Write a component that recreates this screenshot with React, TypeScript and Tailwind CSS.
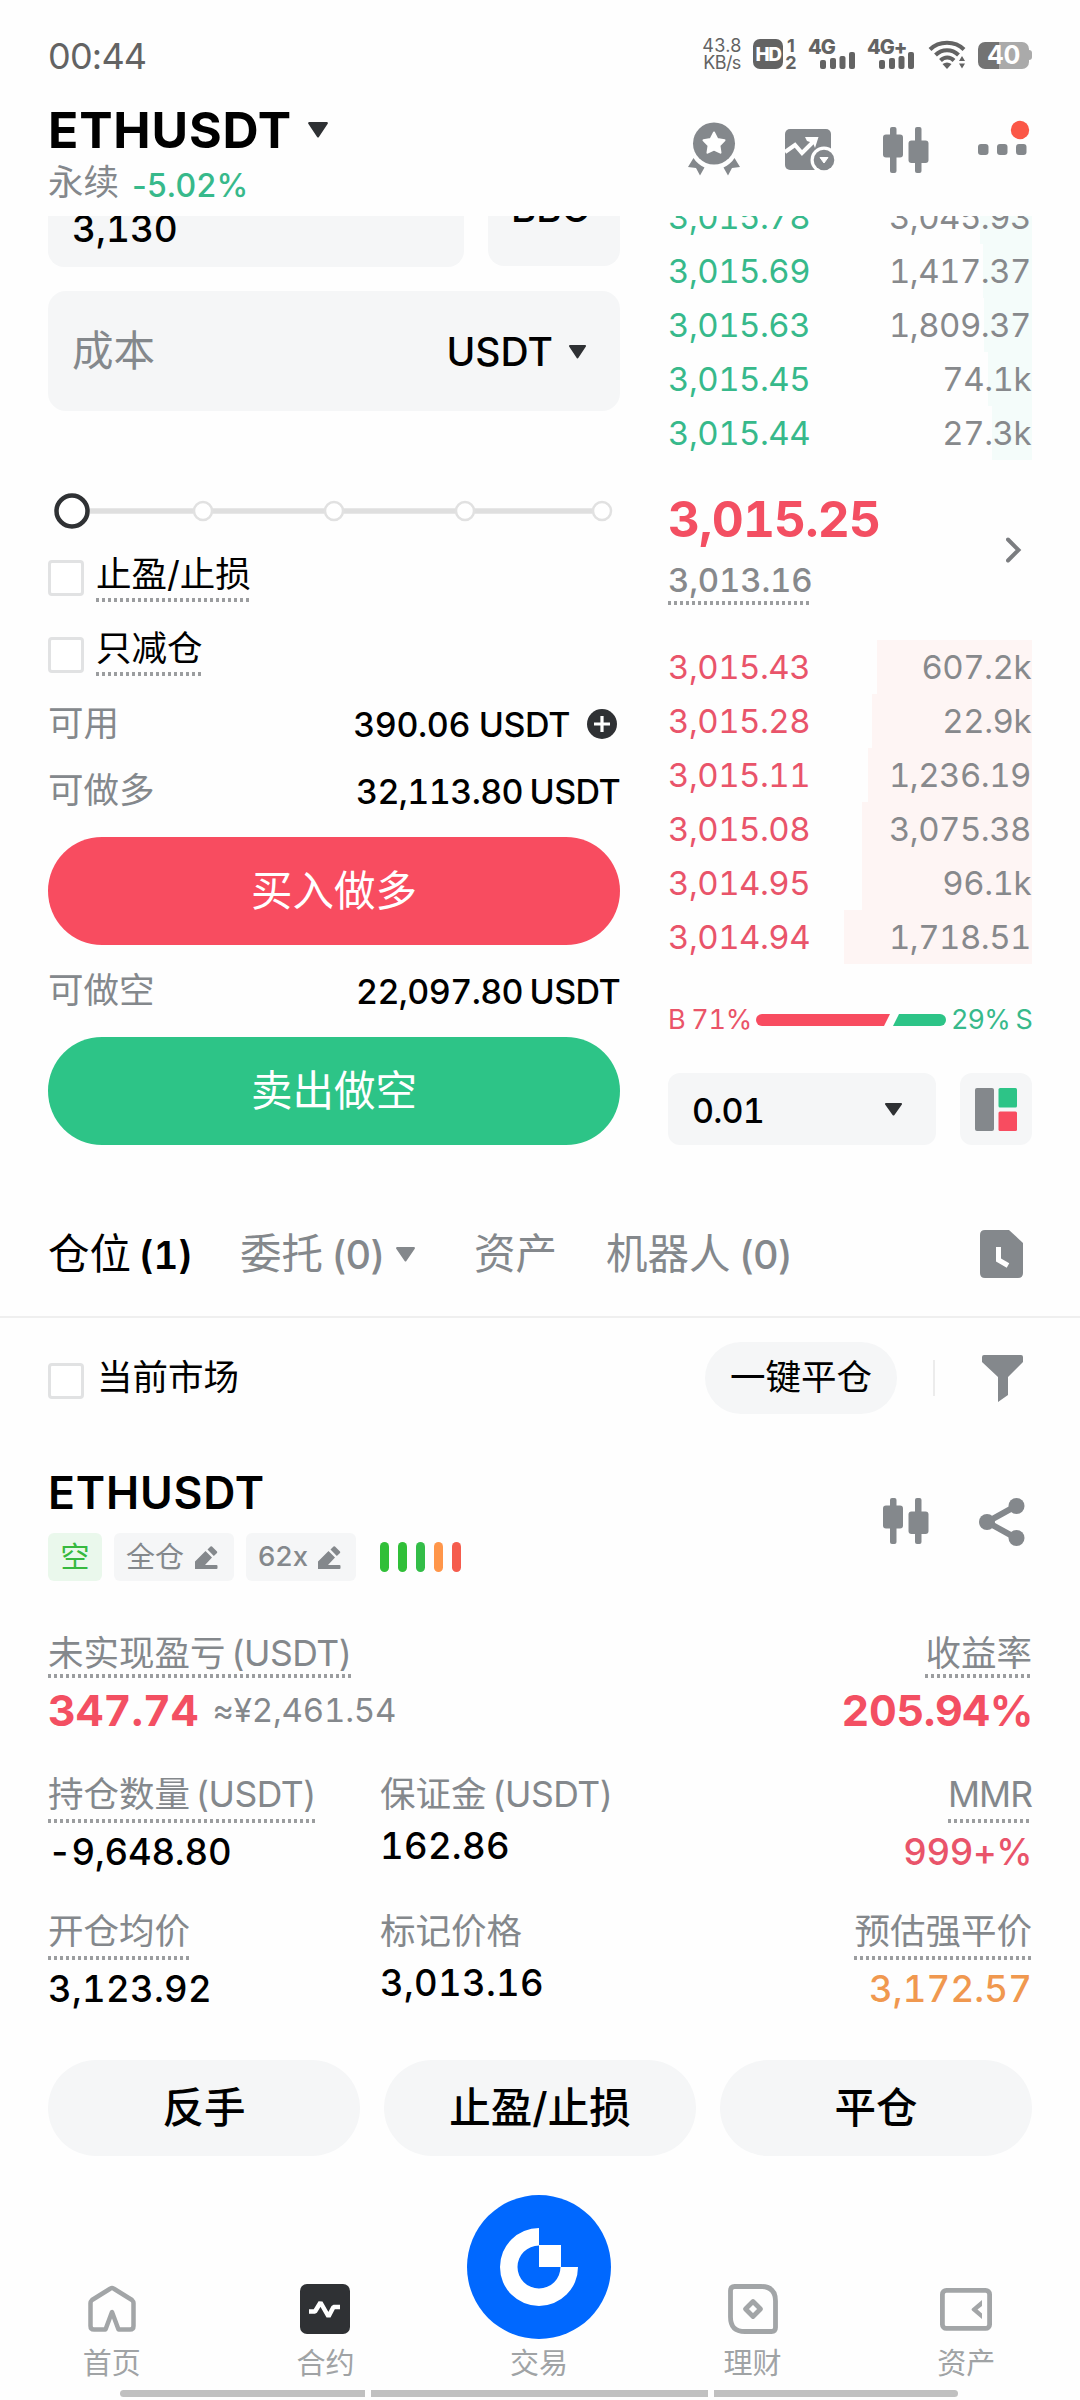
import React from "react";

const GRAY = "#84888c";

function Caret({ w, h, color = "#2f3134" }: { w: number; h: number; color?: string }) {
  return (
    <svg width={w} height={h} viewBox="0 0 20 14" preserveAspectRatio="none" className="shrink-0">
      <path d="M2 1H18L10 12.5Z" fill={color} stroke={color} strokeWidth="2" strokeLinejoin="round" />
    </svg>
  );
}

function Dots() {
  return (
    <span className="block h-[4px] w-full bg-[repeating-linear-gradient(90deg,#9b9d9f_0px,#9b9d9f_3px,transparent_3px,transparent_6px)]" />
  );
}

function Checkbox({ className }: { className: string }) {
  return <span className={`block h-[36px] w-[36px] shrink-0 rounded-[4px] border-[3px] border-[#e1e2e3] bg-white ${className}`} />;
}

function Signal({ label }: { label: string }) {
  return (
    <div className="relative h-[30px] w-[48px]">
      <span className="absolute left-0 top-[-2px] whitespace-nowrap text-[20px] font-extrabold leading-[20px] tracking-[-1px]">{label}</span>
      <svg className="absolute bottom-0 left-[12px]" width="36" height="17" viewBox="0 0 36 17" fill="#636363">
        <rect x="0" y="8" width="6" height="9" rx="2" />
        <rect x="10" y="6" width="6" height="11" rx="2" />
        <rect x="19.500" y="4" width="6" height="13" rx="2" />
        <rect x="29" y="0" width="6" height="17" rx="2" />
      </svg>
    </div>
  );
}

function StatusBar() {
  return (
    <div className="flex h-[108px] shrink-0 items-center pl-[48px] text-[#636363]">
      <span className="mt-[4px] w-[654px] text-[36px] leading-[40px] tracking-[-0.8px]">00:44</span>
      <div className="w-[40px] text-center text-[18px] leading-[17px]">
        <div className="tracking-[0.3px]">43.8</div>
        <div className="tracking-[-0.6px]">KB/s</div>
      </div>
      <div className="ml-[11px] flex h-[30px] w-[30px] items-center justify-center rounded-[7px] bg-[#636363] text-[19px] font-extrabold leading-none tracking-[-1.5px] text-white">
        HD
      </div>
      <div className="ml-[2px] flex w-[12px] flex-col items-center text-[18px] font-bold leading-[17px]">
        <span>1</span>
        <span>2</span>
      </div>
      <div className="ml-[11px]">
        <Signal label="4G" />
      </div>
      <div className="ml-[11px]">
        <Signal label="4G+" />
      </div>
      <svg className="ml-[13px]" width="38" height="30" viewBox="0 0 38 30">
        <g fill="none" stroke="#636363" strokeWidth="4">
          <path d="M2 10.500C11 1.500 27 1.500 36 10.500" />
          <path d="M7.500 16C14 9.500 24 9.500 30.500 16" />
          <path d="M12.500 21.500C16.500 17.500 22 17.500 26 21.500" />
        </g>
        <path d="M14.500 25Q19 22 23.500 25L19 30Z" fill="#636363" />
        <path d="M31 22L34 17L37 22ZM31 24.500H37L34 29.500Z" fill="#636363" />
      </svg>
      <div className="ml-[12px] mt-[2px] flex items-center">
        <div className="flex h-[27px] w-[51px] items-center justify-center rounded-[7px] bg-[linear-gradient(90deg,#737373_0%,#737373_42%,#aaaaaa_42%,#aaaaaa_100%)] text-[25px] font-bold leading-none tracking-[-0.5px] text-white">
          40
        </div>
        <div className="h-[10px] w-[3px] rounded-r-[3px] bg-[#aaaaaa]" />
      </div>
    </div>
  );
}

function Candles() {
  return (
    <svg width="46" height="46" viewBox="0 0 46 46" fill={GRAY}>
      <rect x="7" y="0" width="6.500" height="46" rx="2" />
      <rect x="0" y="7.500" width="20" height="23" rx="3" />
      <rect x="32" y="0" width="6.500" height="46" rx="2" />
      <rect x="25.500" y="13.500" width="20" height="22.500" rx="3" />
    </svg>
  );
}

function Header() {
  return (
    <div className="relative flex h-[108px] shrink-0 justify-between pl-[48px] pr-[50px]">
      <div>
        <div className="flex items-center">
          <span className="text-[50px] font-bold leading-[44px] tracking-[0.8px]">ETHUSDT</span>
          <span className="ml-[15px]">
            <Caret w={22} h={16} />
          </span>
        </div>
        <div className="mt-[10px] flex items-center text-[#84888c]">
          <span className="text-[35.500px] leading-[40px]">永续</span>
          <span className="ml-[13px] mt-[6px] text-[32px] font-medium leading-[36px] tracking-[0.3px] text-[#37b98b]">-5.02%</span>
        </div>
      </div>
      <div className="flex items-start">
        <svg className="mt-[14px]" width="54" height="54" viewBox="0 0 54 54" fill={GRAY}>
          <circle cx="27" cy="21.500" r="21" />
          <path
            d="M27 10.500L30.300 17L37.500 18.200L32.400 23.500L33.500 30.700L27 27.500L20.500 30.700L21.600 23.500L16.500 18.200L23.700 17Z"
            fill="#fff"
            stroke="#fff"
            strokeWidth="2"
            strokeLinejoin="round"
          />
          <path d="M6.500 36C9 40 13 43.500 17.500 45.500L13 53.500L9 46L1 45Z" />
          <path d="M47.500 36C45 40 41 43.500 36.500 45.500L41 53.500L45 46L53 45Z" />
        </svg>
        <svg className="ml-[44px] mt-[21px]" width="50" height="42" viewBox="0 0 50 42">
          <rect x="0" y="0" width="46" height="41" rx="5" fill={GRAY} />
          <path d="M0 23L10 16L17 24L30 11" fill="none" stroke="#fff" strokeWidth="4" />
          <path d="M20 8H33.500L30 19L28 14L22 12Z" fill="#fff" />
          <circle cx="39" cy="31" r="13.500" fill="#fff" />
          <circle cx="39" cy="31" r="10.300" fill={GRAY} />
          <path d="M35 28.500H43L39 34Z" fill="#fff" stroke="#fff" strokeLinejoin="round" />
        </svg>
        <div className="ml-[48px] mt-[19px]">
          <Candles />
        </div>
        <svg className="ml-[49px] mt-[12px]" width="52" height="36" viewBox="0 0 52 36">
          <rect x="0" y="24" width="10.500" height="11" rx="3" fill={GRAY} />
          <rect x="19" y="24" width="10.500" height="11" rx="3" fill={GRAY} />
          <rect x="38" y="24" width="10.500" height="11" rx="3" fill={GRAY} />
          <circle cx="42" cy="10" r="9.200" fill="#fb5747" />
        </svg>
      </div>
    </div>
  );
}

function AmountRow({ label, value, plus, className }: { label: string; value: string; plus?: boolean; className: string }) {
  return (
    <div className={`flex h-[40px] items-center justify-between whitespace-nowrap ${className}`}>
      <span className="text-[35.500px] leading-[40px] text-[#84888c]">{label}</span>
      <span className="flex items-center">
        <span
          className={
            plus
              ? "text-[34px] font-medium tabular-nums tracking-[-0.4px]"
              : "mt-[1px] text-[34px] font-medium tabular-nums tracking-[-0.6px] [word-spacing:-2px]"
          }
        >
          {value}
        </span>
        {plus && (
          <svg className="ml-[17px] mr-[3px]" width="30" height="30" viewBox="0 0 30 30">
            <circle cx="15" cy="15" r="15" fill="#2f3134" />
            <path d="M15 7V23M7 15H23" stroke="#fff" strokeWidth="3.200" />
          </svg>
        )}
      </span>
    </div>
  );
}

function OrderForm() {
  return (
    <div className="w-[572px] shrink-0">
      <div className="flex gap-[24px]">
        <div className="h-[51px] w-[416px] rounded-b-[16px] bg-[#f5f6f7] pl-[24px]">
          <div className="mt-[-7px] text-[37px] font-medium leading-[40px] tabular-nums">3,130</div>
        </div>
        <div className="h-[50px] w-[132px] rounded-b-[16px] bg-[#f5f6f7] pl-[23px]">
          <div className="mt-[-28px] text-[38.500px] font-medium leading-[40px]">BBO</div>
        </div>
      </div>
      <div className="mt-[24px] flex h-[120px] items-center justify-between rounded-[18px] bg-[#f5f6f7] pl-[24px] pr-[33px]">
        <span className="text-[41.500px] leading-[44px] text-[#84888c]">成本</span>
        <span className="mt-[2px] flex items-center text-[39px] font-medium leading-[44px]">
          USDT
          <span className="ml-[15px]">
            <Caret w={19} h={14} />
          </span>
        </span>
      </div>
      <svg className="mt-[82px] block" width="572" height="36" viewBox="0 0 572 36">
        <path d="M24 18H554" stroke="#dfdfdf" strokeWidth="5.500" />
        <circle cx="24" cy="18" r="15.500" fill="#fff" stroke="#2f3134" strokeWidth="4.500" />
        <circle cx="155" cy="18" r="9" fill="#fff" stroke="#e1e1e1" strokeWidth="2.500" />
        <circle cx="286" cy="18" r="9" fill="#fff" stroke="#e1e1e1" strokeWidth="2.500" />
        <circle cx="417" cy="18" r="9" fill="#fff" stroke="#e1e1e1" strokeWidth="2.500" />
        <circle cx="554" cy="18" r="9" fill="#fff" stroke="#e1e1e1" strokeWidth="2.500" />
      </svg>
      <div className="mt-[27px] flex items-start">
        <Checkbox className="mt-[4px]" />
        <div className="ml-[12px]">
          <div className="mb-[5px] pt-px text-[35.500px] leading-[36px]">止盈/止损</div>
          <Dots />
        </div>
      </div>
      <div className="mt-[29px] flex items-start">
        <Checkbox className="mt-[6px]" />
        <div className="ml-[12px]">
          <div className="mb-[5px] text-[35.500px] leading-[36px]">只减仓</div>
          <Dots />
        </div>
      </div>
      <AmountRow className="mt-[28px]" label="可用" value="390.06 USDT" plus />
      <AmountRow className="mt-[27px]" label="可做多" value="32,113.80 USDT" />
      <button className="mt-[26px] flex h-[108px] w-full items-center justify-center rounded-full bg-[#f84c60] text-[41.500px] leading-[44px] text-white">
        买入做多
      </button>
      <AmountRow className="mt-[26px]" label="可做空" value="22,097.80 USDT" />
      <button className="mt-[26px] flex h-[108px] w-full items-center justify-center rounded-full bg-[#2dc487] text-[41.500px] leading-[44px] text-white">
        卖出做空
      </button>
    </div>
  );
}

type Level = { price: string; amount: string; depth: number };

const upper: Level[] = [
  { price: "3,015.78", amount: "3,045.93", depth: 52 },
  { price: "3,015.69", amount: "1,417.37", depth: 49 },
  { price: "3,015.63", amount: "1,809.37", depth: 48 },
  { price: "3,015.45", amount: "74.1k", depth: 44 },
  { price: "3,015.44", amount: "27.3k", depth: 40 },
];

const lower: Level[] = [
  { price: "3,015.43", amount: "607.2k", depth: 155 },
  { price: "3,015.28", amount: "22.9k", depth: 160 },
  { price: "3,015.11", amount: "1,236.19", depth: 164 },
  { price: "3,015.08", amount: "3,075.38", depth: 170 },
  { price: "3,014.95", amount: "96.1k", depth: 170 },
  { price: "3,014.94", amount: "1,718.51", depth: 188 },
];

function Levels({ rows, text, fill }: { rows: Level[]; text: string; fill: string }) {
  return (
    <>
      {rows.map((r) => (
        <div key={r.price} className="relative flex h-[54px] items-center justify-between pr-px pt-[2px] text-[33px] tabular-nums tracking-[-0.5px]">
          <div className={`absolute inset-y-0 right-0 ${fill}`} style={{ width: r.depth }} />
          <span className={`relative ${text}`}>{r.price}</span>
          <span className="relative text-[#87898c]">{r.amount}</span>
        </div>
      ))}
    </>
  );
}

function OrderBook() {
  return (
    <div className="ml-[48px] mt-[-26px] w-[364px] shrink-0">
      <Levels rows={upper} text="text-[#37b98b]" fill="bg-[#f4fcfa]" />
      <div className="mt-[30px] flex items-center justify-between">
        <div>
          <div className="text-[49.500px] font-bold leading-[58px] tabular-nums tracking-[-0.8px] text-[#f34f62]">3,015.25</div>
          <div className="mt-[14px] w-[142px]">
            <div className="mb-[3px] text-[33px] font-medium leading-[36px] tabular-nums tracking-[-0.2px] text-[#87898c]">3,013.16</div>
            <Dots />
          </div>
        </div>
        <svg className="mr-[10px] mt-[5px]" width="16" height="26" viewBox="0 0 16 26" fill="none" stroke="#7b7d80" strokeWidth="4">
          <path d="M2 2.500L12.500 13L2 23.500" strokeLinecap="round" />
        </svg>
      </div>
      <div className="mt-[35px]">
        <Levels rows={lower} text="text-[#e9546a]" fill="bg-[#fef5f4]" />
      </div>
      <div className="mt-[41px] flex h-[30px] items-center whitespace-nowrap text-[27px] tabular-nums">
        <span className="w-[88px] tracking-[-0.3px] text-[#ea5468] [word-spacing:-1px]">B 71%</span>
        <svg width="190" height="12" viewBox="0 0 190 12">
          <path d="M6 0H134L128 12H6A6 6 0 0 1 6 0Z" fill="#f84c60" />
          <path d="M143 0H184A6 6 0 0 1 184 12H137Z" fill="#2dc487" />
        </svg>
        <span className="ml-auto tracking-[-0.8px] text-[#37b98b] [word-spacing:-1px]">29% S</span>
      </div>
      <div className="mt-[38px] flex justify-between">
        <div className="flex h-[72px] w-[268px] items-center justify-between rounded-[12px] bg-[#f5f6f7] pl-[24px] pr-[33px]">
          <span className="mt-[2px] text-[34px] font-medium tabular-nums tracking-[-0.8px]">0.01</span>
          <Caret w={19} h={13} />
        </div>
        <div className="flex h-[72px] w-[72px] items-center justify-center rounded-[12px] bg-[#f5f6f7]">
          <svg width="42" height="43" viewBox="0 0 42 43">
            <rect width="19" height="43" rx="2" fill={GRAY} />
            <rect x="23.500" width="18.500" height="19.500" rx="1.500" fill="#2dc487" />
            <rect x="23.500" y="23.500" width="18.500" height="19.500" rx="1.500" fill="#f84c60" />
          </svg>
        </div>
      </div>
    </div>
  );
}

function Tabs() {
  return (
    <div className="mt-[85px] flex h-[48px] shrink-0 items-center whitespace-nowrap pl-[48px] text-[41.500px] leading-[48px] text-[#84888c]">
      <span className="w-[192px] text-black">
        仓位 <span className="-ml-[4px] text-[38.500px] font-semibold tabular-nums tracking-[-0.3px]">(1)</span>
      </span>
      <span className="flex w-[234px] items-center">
        <span>
          委托 <span className="-ml-[3px] text-[39px] font-medium tracking-[-0.4px]">(0)</span>
        </span>
        <span className="ml-[11px]">
          <Caret w={21} h={15} color={GRAY} />
        </span>
      </span>
      <span className="w-[132px]">资产</span>
      <span>
        机器人 <span className="-ml-[3px] text-[39px] font-medium tracking-[-0.4px]">(0)</span>
      </span>
      <svg className="ml-auto mr-[57px]" width="43" height="48" viewBox="0 0 43 48">
        <path d="M5 0H29L43 13V43Q43 48 38 48H5Q0 48 0 43V5Q0 0 5 0Z" fill={GRAY} />
        <path d="M18.500 17V30L28 35.500" fill="none" stroke="#fff" strokeWidth="5" />
      </svg>
    </div>
  );
}

function FilterRow() {
  return (
    <div className="mt-[24px] flex h-[72px] shrink-0 items-center pl-[48px] pr-[57px]">
      <Checkbox className="mt-[6px]" />
      <span className="ml-[13px] text-[35.500px] leading-[40px]">当前市场</span>
      <div className="ml-auto flex h-[72px] w-[192px] items-center justify-center rounded-full bg-[#f5f6f7] text-[35.500px] leading-[40px]">一键平仓</div>
      <div className="ml-[36px] h-[36px] w-[2px] bg-[#ececec]" />
      <svg className="ml-[47px]" width="41" height="47" viewBox="0 0 41 47">
        <path d="M2 0H39Q41 0 41 2V7L26 22V40L16 47V22L0 7V2Q0 0 2 0Z" fill={GRAY} />
      </svg>
    </div>
  );
}

function Pencil() {
  return (
    <svg width="23" height="23" viewBox="0 0 23 23" fill={GRAY}>
      <path d="M0 15.500L10.500 5L17 11.500L10 19H21.500Q22.500 19 22.500 20V22Q22.500 23 21.500 23H0Z" />
      <path d="M12.500 3.500L15.500 0.500Q16.300 0 17 0.500L22 5.500Q22.500 6.300 22 7L18.800 10Z" />
    </svg>
  );
}

function Stat({
  label,
  unit,
  value,
  dotted,
  right,
  labelClass = "",
  valueClass = "tracking-[0.3px] text-black",
}: {
  label: string;
  unit?: string;
  value: string;
  dotted?: boolean;
  right?: boolean;
  labelClass?: string;
  valueClass?: string;
}) {
  return (
    <div className={right ? "flex flex-col items-end whitespace-nowrap" : "flex flex-col items-start whitespace-nowrap"}>
      <div>
        <div className={`h-[36px] text-[35.500px] leading-[36px] text-[#84888c] ${labelClass}`}>
          {label}
          {unit && <span className="ml-[6px] tracking-[-0.5px]">{unit}</span>}
        </div>
        {dotted && (
          <div className="mt-[6px]">
            <Dots />
          </div>
        )}
      </div>
      <div className={`${dotted ? "mt-[9px]" : "mt-[13px]"} h-[40px] text-[36.500px] font-medium leading-[40px] tabular-nums ${valueClass}`}>{value}</div>
    </div>
  );
}

function Position() {
  return (
    <div className="h-[742px] shrink-0 px-[48px]">
      <div className="mt-[55px] flex h-[112px] items-start justify-between">
        <div>
          <div className="text-[44.500px] font-semibold leading-[48px] tracking-[0.8px]">ETHUSDT</div>
          <div className="mt-[16px] flex h-[48px] gap-[12px] text-[29px] leading-none text-[#84888c]">
            <span className="flex w-[54px] items-center justify-center rounded-[6px] bg-[#eaf8ec] text-[#37b93f]">空</span>
            <span className="flex w-[120px] items-center gap-[11px] rounded-[6px] bg-[#f5f6f7] pl-[12px]">
              全仓
              <Pencil />
            </span>
            <span className="flex w-[110px] items-center gap-[10px] rounded-[6px] bg-[#f5f6f7] pl-[12px]">
              <span className="text-[27.500px] font-medium tracking-[0.2px]">62x</span>
              <Pencil />
            </span>
            <span className="ml-[12px] flex items-center gap-[9px]">
              <span className="h-[30px] w-[9px] rounded-full bg-[#30bf38]" />
              <span className="h-[30px] w-[9px] rounded-full bg-[#30bf38]" />
              <span className="h-[30px] w-[9px] rounded-full bg-[#33bd48]" />
              <span className="h-[30px] w-[9px] rounded-full bg-[#ff964a]" />
              <span className="h-[30px] w-[9px] rounded-full bg-[#f55c4d]" />
            </span>
          </div>
        </div>
        <div className="mr-[7px] mt-[29px] flex gap-[50px]">
          <Candles />
          <svg width="46" height="48" viewBox="0 0 46 48" fill={GRAY}>
            <path d="M37 8L8 24L37 40" fill="none" stroke={GRAY} strokeWidth="6" />
            <circle cx="37.500" cy="8" r="8" />
            <circle cx="8" cy="24" r="8" />
            <circle cx="37.500" cy="40" r="8" />
          </svg>
        </div>
      </div>

      <div className="mt-[55px] flex h-[42px] justify-between text-[35.500px] leading-[36px] text-[#84888c]">
        <div>
          <div className="mb-[2px] h-[36px]">
            未实现盈亏<span className="ml-[6px] tracking-[-0.5px]">(USDT)</span>
          </div>
          <Dots />
        </div>
        <div>
          <div className="mb-[2px] h-[36px]">收益率</div>
          <Dots />
        </div>
      </div>
      <div className="mt-[10px] flex h-[44px] items-center justify-between text-[43px] font-bold leading-[44px] tabular-nums text-[#f34f62]">
        <div className="flex items-center">
          <span>347.74</span>
          <span className="ml-[14px] text-[33px] font-normal tracking-[-0.2px] text-[#84888c]">≈¥2,461.54</span>
        </div>
        <span className="-mr-px tracking-[-0.4px]">205.94%</span>
      </div>

      <div className="mt-[45px] grid grid-cols-[332px_1fr_auto] gap-y-[42px]">
        <Stat label="持仓数量" unit="(USDT)" value="-9,648.80" dotted valueClass="tracking-[-0.2px] text-black" />
        <Stat label="保证金" unit="(USDT)" value="162.86" />
        <Stat label="MMR" value="999+%" dotted right labelClass="tracking-[-1px]" valueClass="tracking-[-0.4px] text-[#e9546a]" />
        <Stat label="开仓均价" value="3,123.92" dotted />
        <Stat label="标记价格" value="3,013.16" />
        <Stat label="预估强平价" value="3,172.57" dotted right valueClass="tracking-[0.2px] text-[#f0984f]" />
      </div>

      <div className="mt-[51px] grid grid-cols-3 gap-[24px] text-[41.500px] font-medium leading-[44px]">
        <button className="h-[96px] rounded-full bg-[#f5f6f7]">反手</button>
        <button className="h-[96px] rounded-full bg-[#f5f6f7]">止盈/止损</button>
        <button className="h-[96px] rounded-full bg-[#f5f6f7]">平仓</button>
      </div>
    </div>
  );
}

function NavItem({ label, children }: { label: string; children: React.ReactNode }) {
  return (
    <div className="flex flex-col items-center justify-end">
      {children}
      <span className="pt-px text-[29px] leading-[35px] text-[#a0a3a5]">{label}</span>
    </div>
  );
}

function BottomNav() {
  const line = "#a2a5a7";
  return (
    <>
      <div className="grid h-[225px] shrink-0 grid-cols-5 pl-[5px] pr-[7px]">
        <NavItem label="首页">
          <svg className="mb-[12px]" width="48" height="48" viewBox="0 0 48 48" fill="none" stroke={line} strokeWidth="4.500" strokeLinejoin="round">
            <path d="M17.500 44.500H6Q2.500 44.500 2.500 41V18Q2.500 16.500 4 15L22.500 3.500Q24 2.500 25.500 3.500L44 15Q45.500 16.500 45.500 18V41Q45.500 44.500 42 44.500H30.500L24 27Z" />
          </svg>
        </NavItem>
        <NavItem label="合约">
          <svg className="mb-[11px]" width="50" height="50" viewBox="0 0 50 50">
            <rect width="50" height="50" rx="7" fill="#2f3134" />
            <path d="M9 27.500H15L20.500 18.500L28.500 32.500L33.500 23H40" fill="none" stroke="#fff" strokeWidth="4.500" strokeLinejoin="bevel" />
          </svg>
        </NavItem>
        <NavItem label="交易">
          <svg className="mb-[6px]" width="144" height="144" viewBox="0 0 144 144">
            <circle cx="72" cy="72" r="72" fill="#0068ff" />
            <path d="M72 33A39 39 0 1 0 111 72H93.500A21.500 21.500 0 1 1 72 50.500Z" fill="#fff" />
            <rect x="72" y="50" width="22" height="22" fill="#fff" />
          </svg>
        </NavItem>
        <NavItem label="理财">
          <svg className="mb-[11px]" width="50" height="50" viewBox="0 0 50 50" fill="none" stroke={line} strokeWidth="4.800">
            <path d="M6.500 2.500H33Q47.500 2.500 47.500 17V43.500Q47.500 47.500 43.500 47.500H17Q2.500 47.500 2.500 33V6.500Q2.500 2.500 6.500 2.500Z" />
            <path d="M25 17.500L32.500 25L25 32.500L17.500 25Z" strokeLinejoin="round" />
          </svg>
        </NavItem>
        <NavItem label="资产">
          <svg className="mb-[14px]" width="52" height="43" viewBox="0 0 52 43">
            <rect x="2.400" y="2.400" width="47.200" height="38" rx="4" fill="none" stroke={line} strokeWidth="4.800" />
            <path d="M42 12V18L37.500 21.500L42 25.500V31L32 22.500Q31 21.500 32 20.500Z" fill={line} />
          </svg>
        </NavItem>
      </div>
      <div className="ml-[120px] mt-[9px] flex h-[7px] shrink-0 gap-[6px]">
        <div className="w-[245px] rounded-l-full bg-[#c0c0c0]" />
        <div className="w-[337px] bg-[#c0c0c0]" />
        <div className="w-[244px] rounded-r-full bg-[#c0c0c0]" />
      </div>
    </>
  );
}

export default function App() {
  return (
    <div className="flex h-[2400px] w-[1080px] flex-col overflow-hidden bg-[#fefefe] font-['Inter','Noto_Sans_CJK_SC',sans-serif] text-black">
      <StatusBar />
      <Header />
      <div className="flex h-[929px] shrink-0 overflow-hidden pl-[48px]">
        <OrderForm />
        <OrderBook />
      </div>
      <Tabs />
      <div className="mt-[38px] h-[2px] shrink-0 bg-[#efefef]" />
      <FilterRow />
      <Position />
      <BottomNav />
    </div>
  );
}
